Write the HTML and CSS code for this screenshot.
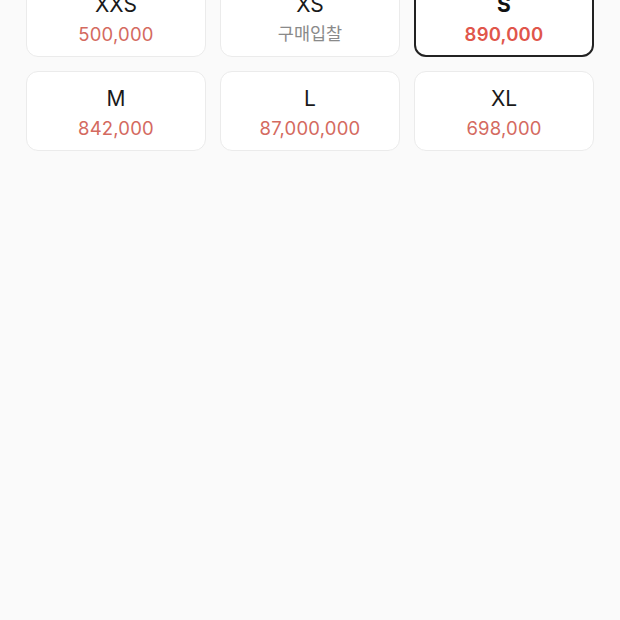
FILE: index.html
```html
<!DOCTYPE html>
<html lang="ko">
<head>
<meta charset="utf-8">
<link rel="stylesheet" href="styles.css">
</head>
<body>
<div class="grid">
  <div class="card"><div class="size">XXS</div><div class="price">500,000</div></div>
  <div class="card"><div class="size">XS</div><div class="price bid">구매입찰</div></div>
  <div class="card selected"><div class="size">S</div><div class="price">890,000</div></div>
  <div class="card"><div class="size">M</div><div class="price">842,000</div></div>
  <div class="card"><div class="size">L</div><div class="price">87,000,000</div></div>
  <div class="card"><div class="size">XL</div><div class="price">698,000</div></div>
</div>
</body>
</html>
```
FILE: styles.css
```css
html, body {
  margin: 0;
  background: #fafafa;
  font-family: Inter, "Noto Sans CJK KR", sans-serif;
}
.grid {
  display: grid;
  grid-template-columns: repeat(3, 180px);
  gap: 14px;
  padding: 0 26px;
  margin-top: -23px;
}
.card {
  box-sizing: border-box;
  height: 80px;
  background: #fff;
  border: 1px solid #ebebeb;
  border-radius: 12px;
  padding-top: 13px;
  text-align: center;
}
.card.selected {
  border: 2px solid #222;
  padding-top: 12px;
}
.size {
  font-size: 21px;
  line-height: 28px;
  color: #1a1a1a;
}
.price {
  font-size: 18.5px;
  line-height: 30px;
  color: #d46a5f;
  letter-spacing: 0.2px;
}
.price.bid {
  color: #8a8a8a;
  font-size: 17.5px;
  letter-spacing: 0;
}
.selected .size {
  font-weight: 700;
  color: #111;
}
.selected .price {
  font-weight: 600;
  color: #e0564b;
}
```
